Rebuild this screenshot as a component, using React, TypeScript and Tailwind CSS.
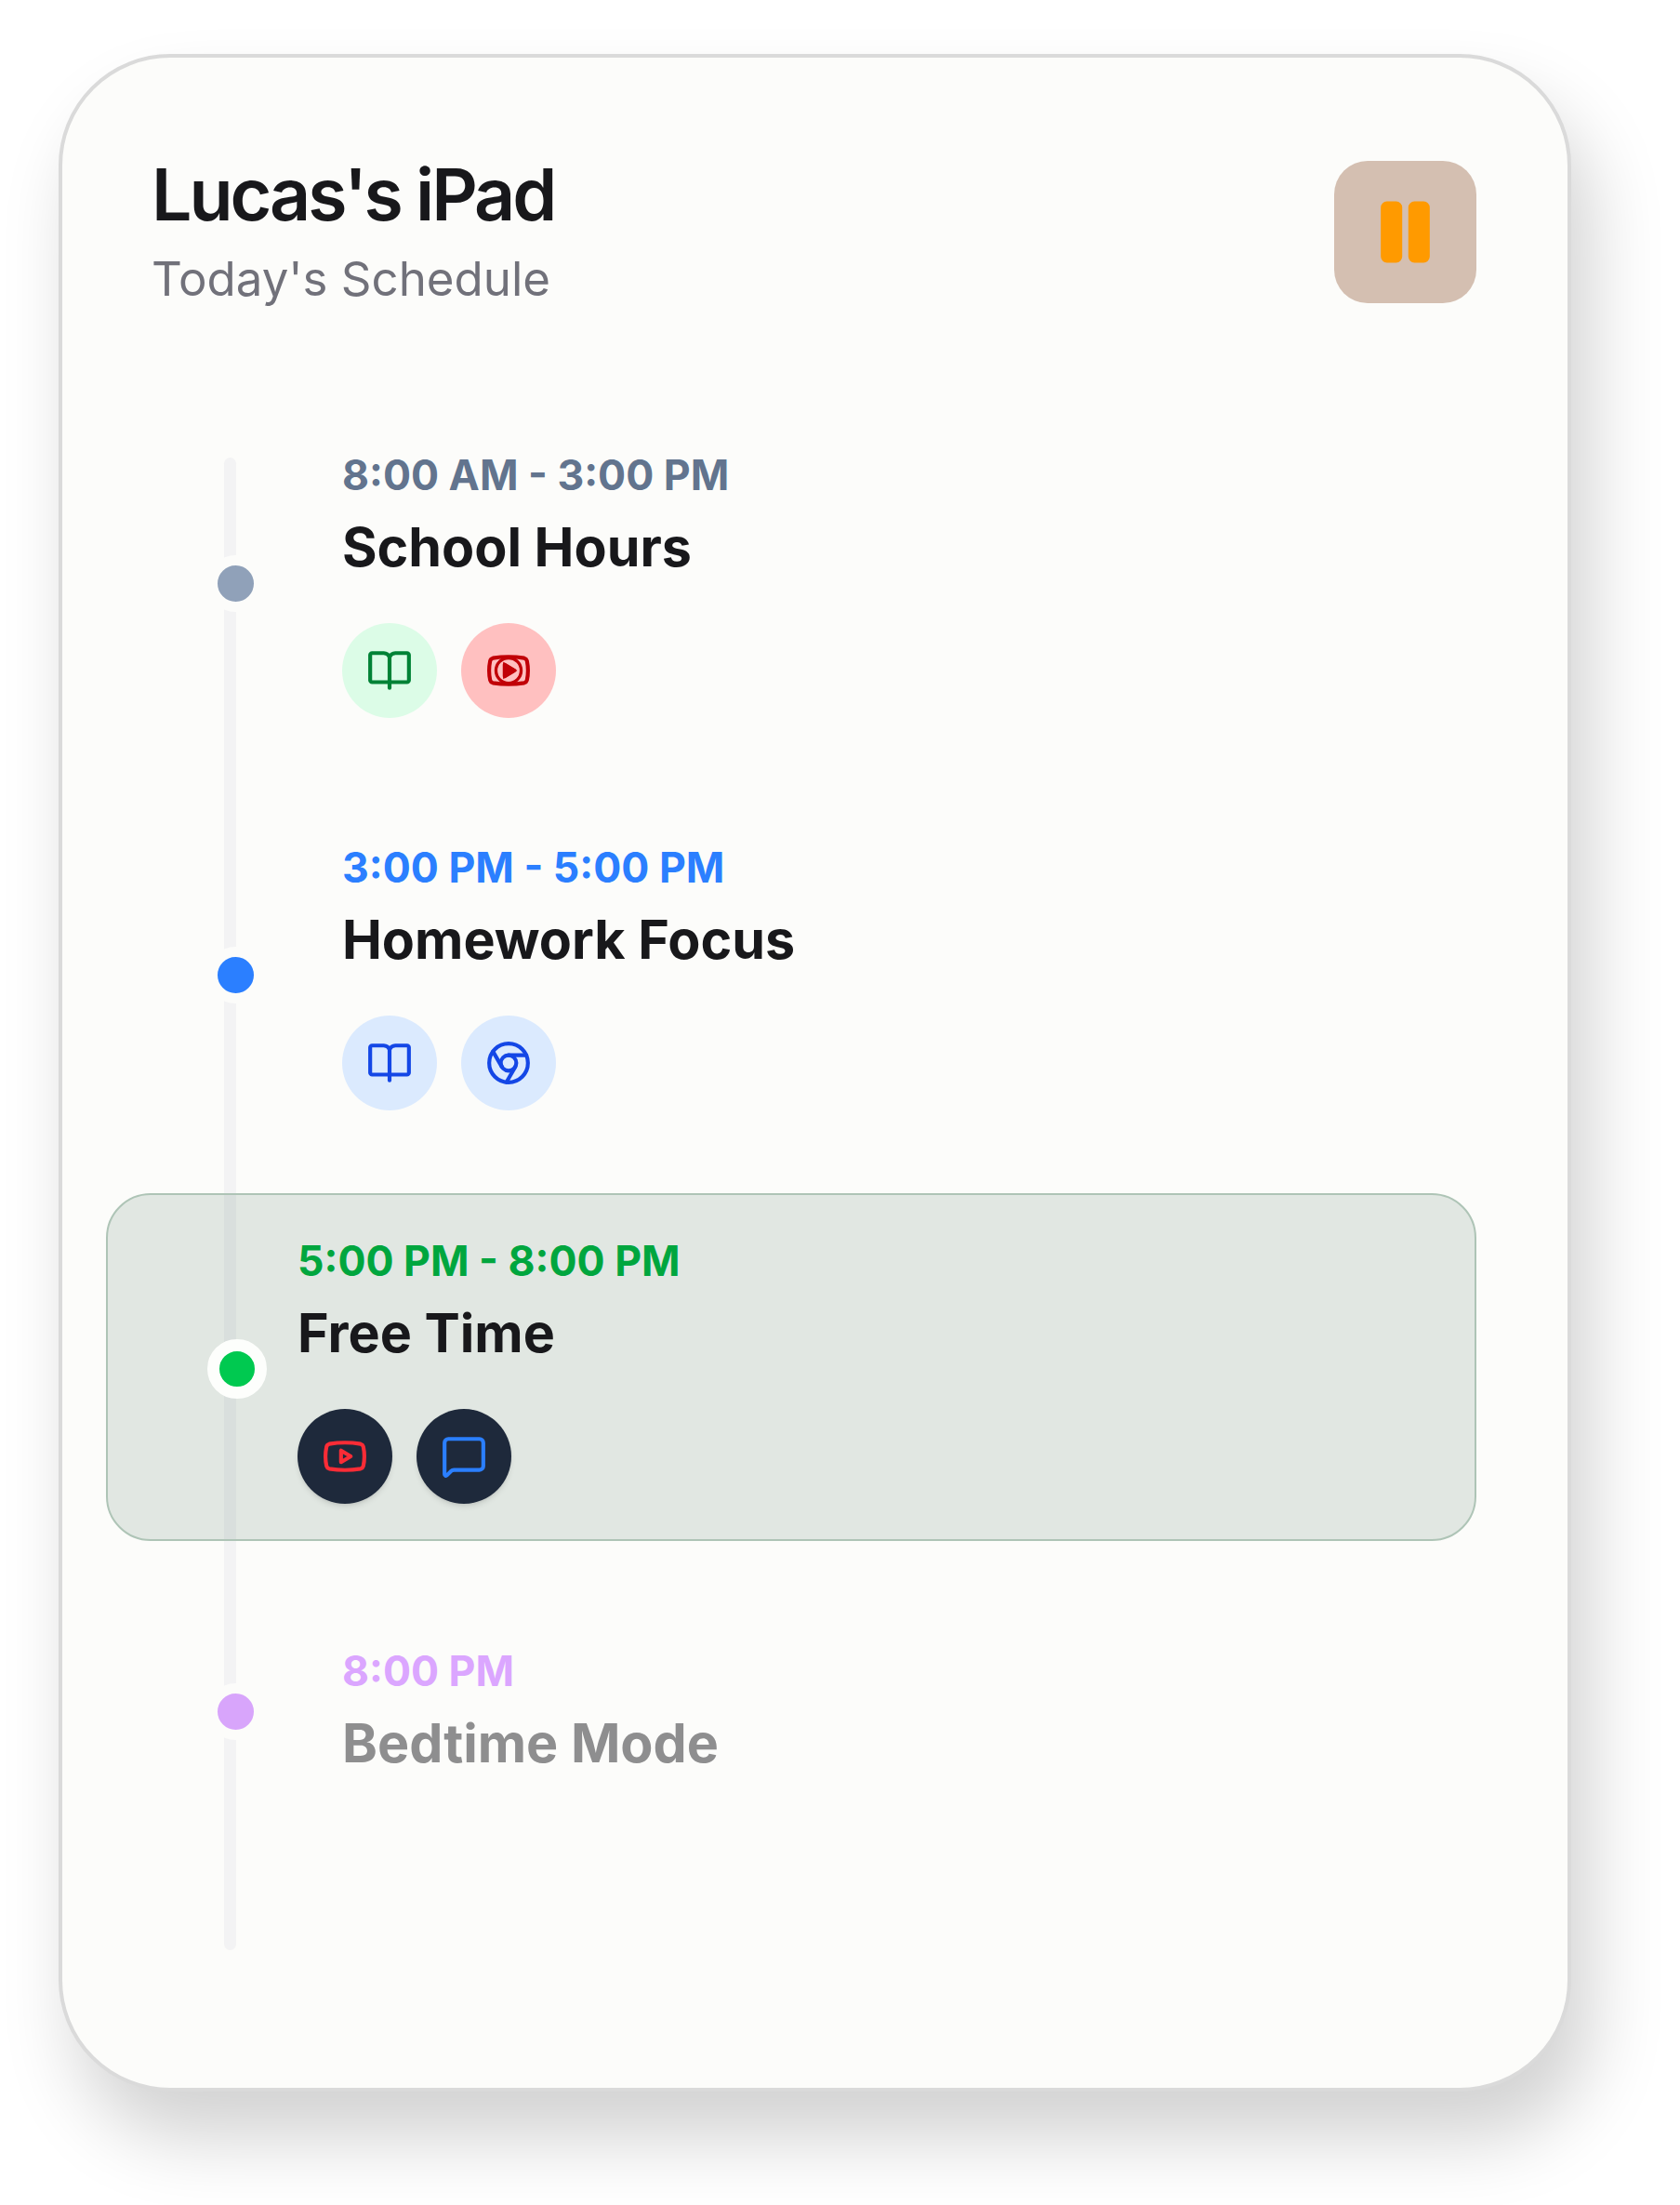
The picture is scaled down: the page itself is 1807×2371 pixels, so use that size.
import React from 'react';
import { Chrome, MessageSquare, Pause, Youtube } from 'lucide-react';

const font = { fontFamily: 'Inter, "Liberation Sans", sans-serif' };

const Dot: React.FC<{ className: string }> = ({ className }) => (
  <div className={`absolute w-[61px] h-[61px] rounded-full border-[11px] border-[#fcfcfa] ${className}`}></div>
);

const Chip: React.FC<{ className: string; children: React.ReactNode }> = ({ className, children }) => (
  <div className={`w-[102px] h-[102px] rounded-full flex items-center justify-center ${className}`}>{children}</div>
);

const Book = () => (
  <svg width="50" height="50" viewBox="0 0 24 24" fill="none" stroke="currentColor" strokeWidth="2" strokeLinecap="round" strokeLinejoin="round">
    <path d="M12 5.5v15.5" />
    <path d="M3 18a1 1 0 0 1-1-1V4a1 1 0 0 1 1-1h6a3.5 3.5 0 0 1 3 2 3.5 3.5 0 0 1 3-2h6a1 1 0 0 1 1 1v13a1 1 0 0 1-1 1z" />
  </svg>
);

const RedYoutube = () => (
  <div className="relative w-[50px] h-[50px] text-[#c10007]">
    <Youtube size={50} strokeWidth={2} />
    <svg className="absolute inset-0" width="50" height="50" viewBox="0 0 24 24" fill="none" stroke="currentColor" strokeWidth="1.6">
      <circle cx="12" cy="12" r="6.5" />
      <path d="M10 9l5 3-5 3z" fill="currentColor" />
    </svg>
  </div>
);

const App: React.FC = () => {
  return (
    <div className="h-[2371px] overflow-hidden bg-white pt-[58px] pl-[63px]" style={font}>
      <div className="box-border w-[1627px] h-[2191px] rounded-[120px] border-4 border-[#dadada] bg-[#fcfcfa] px-[98px] pt-[107px] shadow-[20px_50px_80px_rgba(0,0,0,0.18)]">

        {/* Header */}
        <div className="flex items-center justify-between">
          <div className="-ml-[2px]">
            <h1 className="-mt-[2px] text-[77px] leading-[84px] font-semibold tracking-[-0.04em] text-[#18181b]">Lucas's iPad</h1>
            <p className="mt-[19px] text-[51px] leading-[60px] text-[#71717a]">Today's Schedule</p>
          </div>
          <div className="w-[153px] h-[153px] rounded-[36px] bg-[#d4bfb1] flex items-center justify-center text-[#ff9a00]">
            <Pause size={79} fill="currentColor" strokeWidth={2} />
          </div>
        </div>

        {/* Timeline */}
        <div className="relative mt-[157px]">
          <div className="absolute left-[76px] top-[5px] w-[13px] h-[1605px] rounded-full bg-[#f3f3f4]"></div>

          <div className="relative pl-[203px]">
            <Dot className="left-[58px] top-[110px] bg-[#90a1b9]" />
            <p className="text-[44.6px] leading-[48px] font-bold text-[#62748e]">8:00 AM - 3:00 PM</p>
            <h3 className="mt-[21px] text-[57.4px] leading-[64px] font-bold text-[#18181b]">School Hours</h3>
            <div className="mt-[50px] flex gap-[26px]">
              <Chip className="bg-[#dcfce7] text-[#008236]"><Book /></Chip>
              <Chip className="bg-[#ffc0c0]"><RedYoutube /></Chip>
            </div>
          </div>

          <div className="relative mt-[137px] pl-[203px]">
            <Dot className="left-[58px] top-[109px] bg-[#2b7fff]" />
            <p className="text-[44.6px] leading-[48px] font-bold text-[#2b7fff]">3:00 PM - 5:00 PM</p>
            <h3 className="mt-[21px] text-[57.4px] leading-[64px] font-bold text-[#18181b]">Homework Focus</h3>
            <div className="mt-[50px] flex gap-[26px]">
              <Chip className="bg-[#dbeafe] text-[#1447e6]"><Book /></Chip>
              <Chip className="bg-[#dbeafe] text-[#1447e6]"><Chrome size={50} /></Chip>
            </div>
          </div>

          {/* Active row */}
          <div className="relative mt-[89px] -ml-[51px] box-border h-[374px] rounded-[48px] border-2 border-[#aec4b6] bg-[rgba(25,80,55,0.118)] pl-[204px] pt-[47px]">
            <div className="absolute left-[107px] top-[155px] w-[64px] h-[64px] rounded-full border-[13px] border-[#fdfefc] bg-[#00c950]"></div>
            <p className="text-[44.6px] leading-[48px] font-bold text-[#00a63e]">5:00 PM - 8:00 PM</p>
            <h3 className="mt-[21px] text-[57.4px] leading-[64px] font-bold text-[#18181b]">Free Time</h3>
            <div className="mt-[50px] flex gap-[26px]">
              <Chip className="bg-[#1e293b] text-[#fb2c36] shadow-md"><Youtube size={50} /></Chip>
              <Chip className="bg-[#1e293b] text-[#2b7fff] shadow-md"><MessageSquare size={50} /></Chip>
            </div>
          </div>

          <div className="relative mt-[116px] pl-[203px]">
            <Dot className="left-[58px] top-[37px] bg-[#d8a5fb]" />
            <p className="text-[44.6px] leading-[48px] font-bold text-[#dba6ff]">8:00 PM</p>
            <h3 className="mt-[21px] text-[57.4px] leading-[64px] font-bold text-[#8e8e8f]">Bedtime Mode</h3>
          </div>
        </div>
      </div>
    </div>
  );
};

export default App;
